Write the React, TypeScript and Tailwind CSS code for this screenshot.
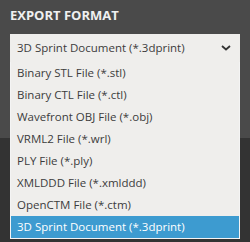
import React from "react";

const items = [
  "Binary STL File (*.stl)",
  "Binary CTL File (*.ctl)",
  "Wavefront OBJ File (*.obj)",
  "VRML2 File (*.wrl)",
  "PLY File (*.ply)",
  "XMLDDD File (*.xmlddd)",
  "OpenCTM File (*.ctm)",
  "3D Sprint Document (*.3dprint)",
];

export default function App() {
  return (
    <div
      className="relative w-[250px] h-[242px] overflow-hidden bg-[#333333]"
      style={{ fontFamily: '"Open Sans", sans-serif' }}
    >
      <div className="h-[138px] bg-[#4a4a4a] px-[10px] pt-[7px]">
        <div className="text-[13px] font-bold leading-[16px] text-[#f0f0f0]">
          EXPORT FORMAT
        </div>
        <div className="relative mt-[11px]">
          <div className="flex h-[28px] items-center justify-between bg-[#efeeec] pl-[7px] pr-[8px] text-[11.5px] text-[#3c3c3c]">
            <span>3D Sprint Document (*.3dprint)</span>
            <svg width="10" height="6" viewBox="0 0 10 6" className="mr-[1px]">
              <path d="M1 1 L5 4.5 L9 1" fill="none" stroke="#333" strokeWidth="1.8" />
            </svg>
          </div>
          <div className="absolute left-0 right-0 top-[28px] z-10 bg-[#efeeec] border-x border-b border-[#f4f4f4]">
            {items.map((it, i) => (
              <div
                key={it}
                className={
                  i === items.length - 1
                    ? "h-[22px] flex items-center pl-[6px] text-[11.5px] bg-[#3d9bd0] text-white"
                    : "h-[22px] flex items-center pl-[6px] text-[11.5px] text-[#3c3c3c]"
                }
              >
                {it}
              </div>
            ))}
          </div>
        </div>
      </div>
    </div>
  );
}
